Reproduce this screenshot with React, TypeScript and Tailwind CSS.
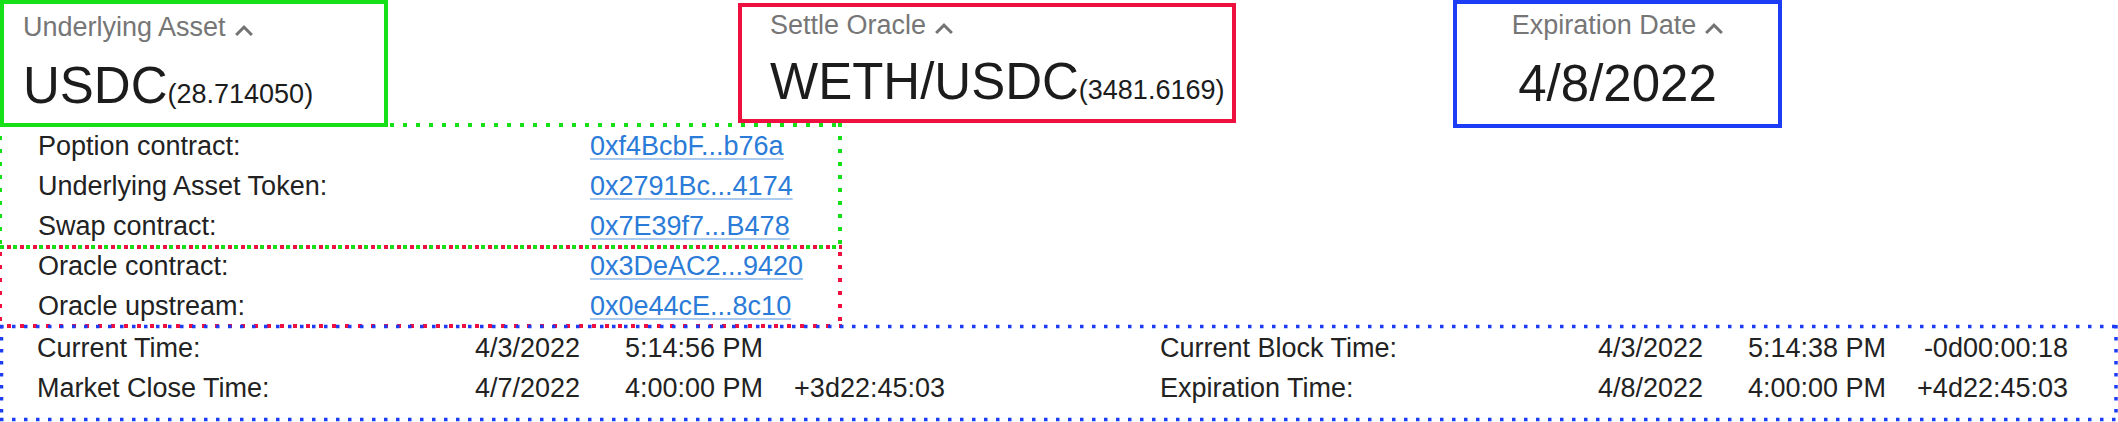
import React from "react";

const Caret = () => (
  <svg width="18" height="11" viewBox="6 8 12 7.41" className="mt-[6px]" aria-hidden>
    <path d="M12 8l-6 6 1.41 1.41L12 10.83l4.59 4.58L18 14z" fill="#737373" />
  </svg>
);

const Title = ({ text }: { text: string }) => (
  <div className="flex items-center gap-[9px] text-[27px] leading-[31px] text-[#767676]">
    <span>{text}</span>
    <Caret />
  </div>
);

const contractsA = [
  ["Poption contract:", "0xf4BcbF...b76a"],
  ["Underlying Asset Token:", "0x2791Bc...4174"],
  ["Swap contract:", "0x7E39f7...B478"],
];
const contractsB = [
  ["Oracle contract:", "0x3DeAC2...9420"],
  ["Oracle upstream:", "0x0e44cE...8c10"],
];

const Row = ({ label, addr }: { label: string; addr: string }) => (
  <div className="grid grid-cols-[552px_1fr] h-[40px] items-center pl-[38px] text-[27px] leading-[40px]">
    <span className="text-[#222]">{label}</span>
    <a href="#" className="text-[#2b7bd8] underline decoration-[#2b7bd8]/40 underline-offset-[3px]">
      {addr}
    </a>
  </div>
);

type TimeRow = [string, string, string, string];

const TimeGroup = ({ rows, className }: { rows: TimeRow[]; className?: string }) => (
  <div className={className}>
    {rows.map((r, i) => (
      <div key={i} className="grid grid-cols-[438px_150px_145px_175px] h-[40px] items-center text-[27px] leading-[40px] text-[#222]">
        <span>{r[0]}</span>
        <span>{r[1]}</span>
        <span>{r[2]}</span>
        <span className="text-right">{r[3]}</span>
      </div>
    ))}
  </div>
);

const GREEN = "#18e018";
const RED = "#ee1140";
const BLUE = "#1d3cf5";

const DottedFrames = () => (
  <svg className="absolute left-0 top-0 pointer-events-none" width="2118" height="422" aria-hidden>
    <g stroke={GREEN} strokeWidth="4" strokeDasharray="4 9" fill="none">
      <line x1="0" y1="125" x2="842" y2="125" />
      <line x1="840" y1="123" x2="840" y2="249" />
      <line x1="0" y1="247" x2="842" y2="247" />
      <line x1="0" y1="123" x2="0" y2="249" />
    </g>
    <g stroke={RED} strokeWidth="4" strokeDasharray="4 9" strokeDashoffset="6" fill="none">
      <line x1="0" y1="247" x2="842" y2="247" />
      <line x1="840" y1="245" x2="840" y2="328" />
      <line x1="0" y1="326" x2="842" y2="326" />
      <line x1="0" y1="245" x2="0" y2="328" />
    </g>
    <g stroke={BLUE} strokeWidth="3.5" strokeDasharray="3.5 8.5" fill="none">
      <line x1="0" y1="326.5" x2="2118" y2="326.5" />
      <line x1="0" y1="419.5" x2="2118" y2="419.5" />
      <line x1="1.5" y1="325" x2="1.5" y2="421" />
      <line x1="2116" y1="325" x2="2116" y2="421" />
    </g>
  </svg>
);

export default function App() {
  return (
    <div className="relative w-[2118px] h-[422px] overflow-hidden bg-white font-['Liberation_Sans',Arial,sans-serif]">
      <div className="flex items-start h-[126px]">
        <div className="w-[388px] h-[127px] shrink-0 border-4 border-[#18e018] pt-[8px] pl-[19px]">
          <Title text="Underlying Asset" />
          <div className="mt-[14px] leading-[58px] text-[#1c1c1c] whitespace-nowrap">
            <span className="text-[51px]">USDC</span>
            <span className="text-[27px]">(28.714050)</span>
          </div>
        </div>
        <div className="ml-[350px] mt-[3px] w-[498px] h-[120px] shrink-0 border-4 border-[#ee1140] pt-[3px] pl-[28px]">
          <Title text="Settle Oracle" />
          <div className="mt-[12px] leading-[58px] text-[#1c1c1c] whitespace-nowrap">
            <span className="text-[51px]">WETH/USDC</span>
            <span className="text-[27px]">(3481.6169)</span>
          </div>
        </div>
        <div className="ml-[217px] w-[329px] h-[128px] shrink-0 border-4 border-[#1d3cf5] pt-[6px] flex flex-col items-center">
          <Title text="Expiration Date" />
          <div className="mt-[14px] leading-[58px] text-[51px] text-[#1c1c1c]">4/8/2022</div>
        </div>
      </div>

      <div className="w-[840px]">
        {contractsA.map(([l, a]) => (
          <Row key={l} label={l} addr={a} />
        ))}
        {contractsB.map(([l, a]) => (
          <Row key={l} label={l} addr={a} />
        ))}
      </div>

      <div className="w-[2118px] h-[96px] pt-[2px] pl-[37px] flex">
        <TimeGroup
          className="w-[1123px] shrink-0"
          rows={[
            ["Current Time:", "4/3/2022", "5:14:56 PM", ""],
            ["Market Close Time:", "4/7/2022", "4:00:00 PM", "+3d22:45:03"],
          ]}
        />
        <TimeGroup
          rows={[
            ["Current Block Time:", "4/3/2022", "5:14:38 PM", "-0d00:00:18"],
            ["Expiration Time:", "4/8/2022", "4:00:00 PM", "+4d22:45:03"],
          ]}
        />
      </div>

      <DottedFrames />
    </div>
  );
}
